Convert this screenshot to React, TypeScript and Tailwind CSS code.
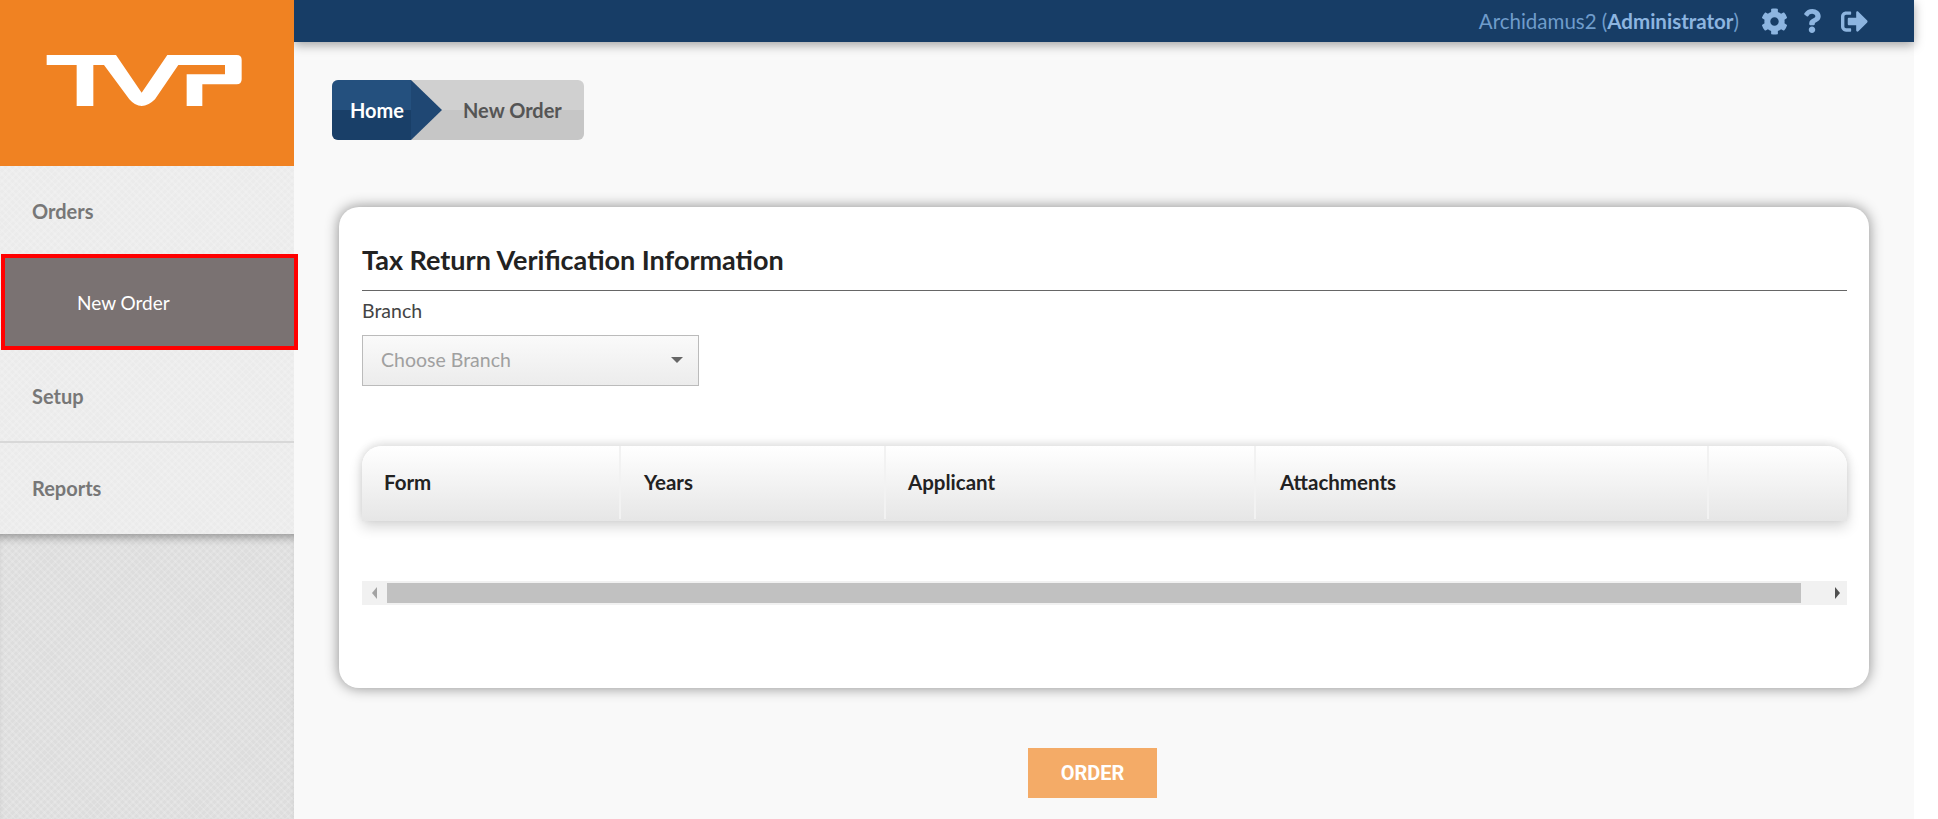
import { FaCog, FaQuestion, FaSignOutAlt } from 'react-icons/fa';

const weave =
  'bg-[repeating-linear-gradient(45deg,rgba(255,255,255,0.14)_0,rgba(255,255,255,0.14)_2px,transparent_2px,transparent_5px),repeating-linear-gradient(-45deg,rgba(255,255,255,0.14)_0,rgba(255,255,255,0.14)_2px,transparent_2px,transparent_5px)]';

function Logo() {
  return (
    <svg viewBox="0 0 630 204" className="h-[68px] w-[210px]">
      <path
        fill="#fff"
        d="M20 27 L228 27 L305 140 L382 27 L590 27 Q605 27 605 42 L605 100 Q605 115 590 115 L487 115 L487 180 L440 180 L440 85 L555 85 L555 57 L415 57 L345 160 Q325 180 305 180 Q285 180 268 160 L192 57 L160 57 L160 180 L110 180 L110 57 L20 57 Z"
      />
    </svg>
  );
}

function Sidebar() {
  return (
    <aside className="relative z-20 flex w-[294px] shrink-0 flex-col bg-[#dddddd]">
      <div className="flex h-[166px] items-start bg-[#f08222] pl-[40px] pt-[46px]">
        <Logo />
      </div>
      <nav className={`flex flex-col bg-[#ebebeb] ${weave}`}>
        <a className="flex h-[88px] items-center pl-[32px] pt-[1px] text-[20px] font-bold text-[#777]">Orders</a>
        <a className="-mr-1 ml-[1px] flex h-[96px] items-center border-4 border-[#f00] bg-[#7a7272] pl-[72px] pt-[3px] text-[19px] text-white">
          New Order
        </a>
        <a className="flex h-[93px] items-center border-b-2 border-[#d8d8d8] pl-[32px] text-[20px] font-bold text-[#777]">
          Setup
        </a>
        <a className="flex h-[91px] items-center pb-[2px] pl-[32px] text-[20px] font-bold text-[#777]">Reports</a>
      </nav>
      <div className={`flex-1 shadow-[inset_0_9px_10px_-6px_rgba(0,0,0,0.35)] ${weave}`} />
    </aside>
  );
}

function Topbar() {
  return (
    <header className="relative z-10 flex h-[42px] shrink-0 items-center justify-end bg-[#173d66] pr-[46px] shadow-[0_3px_10px_rgba(0,0,0,0.35)]">
      <span className="text-[20.5px] text-[#6f9ccb]">
        Archidamus2 (<b className="text-[#8db5e0]">Administrator</b>)
      </span>
      <FaCog className="ml-[22px] text-[27px] text-[#8db5e0]" />
      <FaQuestion className="ml-[12px] text-[24px] text-[#8db5e0]" />
      <FaSignOutAlt className="ml-[17px] text-[27px] text-[#8db5e0]" />
    </header>
  );
}

function Breadcrumb() {
  return (
    <div className="ml-[38px] mt-[38px] flex h-[60px] w-[252px] overflow-hidden rounded-[6px] bg-[linear-gradient(#d0d0d0_50%,#c6c6c6_50%)] text-[20px] font-bold">
      <div className="flex w-[79px] items-center bg-[linear-gradient(#24507e_50%,#193f68_50%)] pl-[18px] text-white">
        Home
      </div>
      <div className="h-0 w-0 border-y-[30px] border-l-[31px] border-y-transparent border-l-[#1f4773]" />
      <div className="flex items-center pl-[21px] text-[#555]">New Order</div>
    </div>
  );
}

const columns = [
  { label: 'Form', width: 'w-[259px] pl-[22px]' },
  { label: 'Years', width: 'w-[265px] pl-[23px]' },
  { label: 'Applicant', width: 'w-[370px] pl-[22px]' },
  { label: 'Attachments', width: 'w-[453px] pl-[24px]' },
  { label: '', width: 'flex-1' },
];

function OrderCard() {
  return (
    <section className="ml-[45px] mt-[67px] flex h-[481px] w-[1530px] flex-col rounded-[20px] bg-white pl-[23px] pr-[22px] pt-[36px] shadow-[0_0_14px_rgba(0,0,0,0.45)]">
      <h2 className="text-[27px] font-bold leading-[34px] text-[#222]">Tax Return Verification Information</h2>
      <hr className="mt-[13px] border-[#666]" />
      <label className="mt-[8px] block text-[19.5px] leading-[24px] text-[#444]">Branch</label>
      <div className="mt-[12px] flex h-[51px] w-[337px] items-center justify-between border border-[#bbb] bg-[linear-gradient(#fafafa,#ececec)] pb-[2px] pl-[18px] pr-[15px] text-[19.5px] text-[#a0a0a0]">
        Choose Branch
        <span className="h-0 w-0 border-x-[6px] border-t-[6px] border-x-transparent border-t-[#666]" />
      </div>
      <div className="mt-[60px] flex h-[75px] shrink-0 rounded-t-[20px] bg-[linear-gradient(#ffffff,#e6e6e6)] pb-[2px] text-[20.5px] font-bold text-[#222] shadow-[0_6px_14px_rgba(0,0,0,0.16),0_-3px_8px_rgba(0,0,0,0.1)]">
        {columns.map((col, i) => (
          <div
            key={i}
            className={`flex items-center ${col.width} ${i < 4 ? 'border-r-2 border-[#f2f2f2]' : ''}`}
          >
            {col.label}
          </div>
        ))}
      </div>
      <div className="mt-[60px] flex h-[24px] items-center bg-[#f1f1f1]">
        <div className="flex w-[25px] justify-center">
          <span className="h-0 w-0 border-y-[6px] border-r-[5px] border-y-transparent border-r-[#a3a3a3]" />
        </div>
        <div className="h-[20px] flex-1 bg-[#c1c1c1]" />
        <div className="flex w-[46px] justify-end pr-[7px]">
          <span className="h-0 w-0 border-y-[6px] border-l-[5px] border-y-transparent border-l-[#505050]" />
        </div>
      </div>
    </section>
  );
}

export default function App() {
  return (
    <div className="flex h-[819px] w-full overflow-hidden bg-white font-['Lato',sans-serif]">
      <div className="flex w-[1914px] shrink-0 bg-[#f9f9f9]">
        <Sidebar />
        <main className="flex min-w-0 flex-1 flex-col">
          <Topbar />
          <Breadcrumb />
          <OrderCard />
          <button className="ml-[734px] mt-[60px] h-[50px] w-[129px] bg-[#f4ab67] font-['Roboto',sans-serif] text-[20px] font-bold text-white">
            ORDER
          </button>
        </main>
      </div>
    </div>
  );
}
